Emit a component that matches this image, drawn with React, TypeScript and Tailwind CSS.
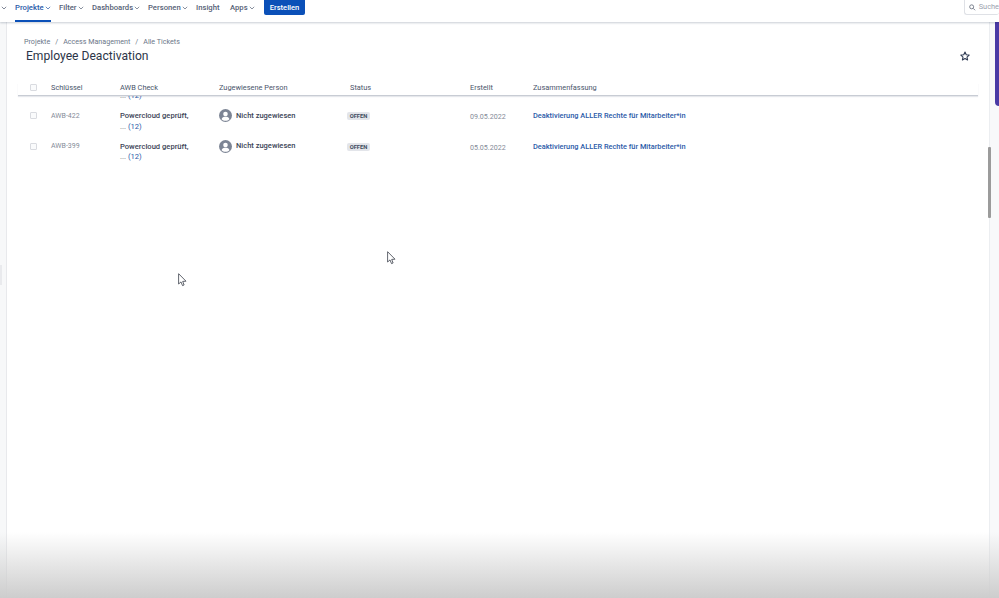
import React from "react";

function Chevron({ className = "" }: { className?: string }) {
  return (
    <svg width="6" height="4" viewBox="0 0 6 4" className={className} fill="none" stroke="currentColor" strokeWidth="0.7">
      <path d="M0.8 0.8 L3 3 L5.2 0.8" />
    </svg>
  );
}

function Cursor({ className }: { className: string }) {
  return (
    <svg width="9" height="14" viewBox="0 0 9 14" className={className} fill="#fff" stroke="#3a3f4a" strokeWidth="0.8">
      <path d="M0.6 0.7 V11 L3 8.9 L4.5 12.6 L6.1 12 L4.7 8.4 L8 8.2 Z" />
    </svg>
  );
}

function NavItem({ label, active, chevron = true, width }: { label: string; active?: boolean; chevron?: boolean; width: string }) {
  return (
    <div className={`flex h-[22px] items-start ${width} ${active ? "text-[#2a5aa8]" : "text-[#566176]"}`}>
      <div className={`flex h-full items-start gap-[1px] pt-[3px] ${active ? "border-b-2 border-[#0b50b8]" : ""}`}>
        <span className="text-[7.7px] leading-[9px] font-medium">{label}</span>
        {chevron && <Chevron className="mt-[3px]" />}
      </div>
    </div>
  );
}

function Avatar() {
  return (
    <svg width="13" height="13" viewBox="0 0 13 13">
      <circle cx="6.5" cy="6.5" r="6.5" fill="#7d8595" />
      <circle cx="6.5" cy="5" r="2.3" fill="#fff" />
      <path d="M2.6 10.2 C3 8.2 4.6 7.8 6.5 7.8 C8.4 7.8 10 8.2 10.4 10.2 C9.4 11.3 8 11.8 6.5 11.8 C5 11.8 3.6 11.3 2.6 10.2 Z" fill="#fff" />
    </svg>
  );
}

const cols = "grid grid-cols-[21px_69px_99px_131px_120px_63px_1fr] items-start";

function More() {
  return (
    <div className="text-[7.6px] leading-[10.5px] font-normal">
      <span className="text-[#6b7280]">...</span>
      <span className="text-[#2a5aa8]"> (12)</span>
    </div>
  );
}

function Row({ id, date }: { id: string; date: string }) {
  return (
    <div className={`${cols} h-[30.5px] pl-[12px]`}>
      <div className="mt-[2px] h-[7px] w-[7px] rounded-[1px] border border-[#d9dbe0] bg-[#fafbfc]" />
      <div className="mt-[0.5px] text-[7px] leading-[10px] text-[#858b98]">{id}</div>
      <div className="text-[7.6px] leading-[10.5px] font-medium text-[#3a4356]">
        <div className="mt-[1px]">Powercloud geprüft,</div>
        <More />
      </div>
      <div className="-mt-[1px] flex items-center gap-[4px] text-[7.5px] font-medium text-[#3a4356]">
        <Avatar />
        <span>Nicht zugewiesen</span>
      </div>
      <div className="mt-[2px] -ml-[3px]">
        <span className="block w-[23px] rounded-[2px] bg-[#e3e5ea] text-center text-[5.8px] leading-[8px] font-bold text-[#414b5e]">OFFEN</span>
      </div>
      <div className="mt-[2px] text-[7.1px] leading-[10px] text-[#858b98]">{date}</div>
      <div className="mt-[1px] text-[7.4px] leading-[10px] font-medium text-[#2a5aa8]">Deaktivierung ALLER Rechte für Mitarbeiter*in</div>
    </div>
  );
}

export default function App() {
  return (
    <div className="relative flex h-[598px] w-[999px] flex-col overflow-hidden bg-white font-['Roboto','Noto_Sans',sans-serif]">
      <header className="z-10 flex h-[22px] shrink-0 items-start bg-white pl-[1px] shadow-[0_1px_2px_rgba(9,30,66,0.22)]">
        <Chevron className="mt-[6px] text-[#4a556b]" />
        <div className="ml-[8px] flex h-full items-start">
          <NavItem label="Projekte" active width="w-[44px]" />
          <NavItem label="Filter" width="w-[33px]" />
          <NavItem label="Dashboards" width="w-[56px]" />
          <NavItem label="Personen" width="w-[48px]" />
          <NavItem label="Insight" chevron={false} width="w-[34px]" />
          <NavItem label="Apps" width="w-[34px]" />
        </div>
        <div className="flex h-[15px] w-[41px] items-center justify-center rounded-b-[2px] bg-[#0b50b8] text-[7.6px] font-medium text-white">Erstellen</div>
        <div className="ml-auto flex h-[15px] w-[35px] items-center gap-[3px] rounded-b-[3px] border border-t-0 border-r-0 border-[#dfe1e6] pl-[4px] text-[7.4px] text-[#9aa1ae]">
          <svg width="7" height="7" viewBox="0 0 7 7" fill="none" stroke="#6b7280" strokeWidth="0.9">
            <circle cx="2.8" cy="2.8" r="2.1" />
            <path d="M4.4 4.4 L6.4 6.4" />
          </svg>
          <span>Suche</span>
        </div>
      </header>

      <div className="flex min-h-0 flex-1">
        <aside className="relative w-[7px] shrink-0 border-r border-[#e8e9ec] bg-[#f7f8f9]">
          <div className="absolute top-[243px] left-0 h-[20px] w-[2px] bg-[#e9eaed]" />
        </aside>

        <main className="flex min-w-0 flex-1 flex-col pl-[11px]">
          <div className="flex items-start pr-[12px]">
            <div className="flex-1 pt-[15px] pl-[6px]">
              <div className="flex gap-[5px] pt-[0.5px] text-[7.15px] leading-[8px] text-[#6b7688]">
                <span>Projekte</span>
                <span>/</span>
                <span>Access Management</span>
                <span>/</span>
                <span>Alle Tickets</span>
              </div>
              <h1 className="mt-[2.5px] pl-[2px] text-[12.1px] leading-[17px] font-normal text-[#2c3548]">Employee Deactivation</h1>
            </div>
            <svg width="10" height="10" viewBox="0 0 24 24" className="mt-[29px] mr-[7px]" fill="none" stroke="#2e3a52" strokeWidth="2.6" strokeLinejoin="round">
              <path d="M12 2.5 L15 9 L22 9.8 L16.8 14.5 L18.2 21.5 L12 18 L5.8 21.5 L7.2 14.5 L2 9.8 L9 9 Z" />
            </svg>
          </div>

          <div className="mr-[11px] flex flex-col">
            <div className={`${cols} mt-[18px] h-[13px] border-b border-[#c8ccd4] pl-[12px] text-[7.4px] leading-[9px] text-[#4a556b] shadow-[0_1px_1px_rgba(9,30,66,0.1)]`}>
              <div className="mt-[1px] h-[7px] w-[7px] rounded-[1px] border border-[#d9dbe0] bg-[#fafbfc]" />
              <div>Schlüssel</div>
              <div>AWB Check</div>
              <div>Zugewiesene Person</div>
              <div>Status</div>
              <div>Erstellt</div>
              <div>Zusammenfassung</div>
            </div>
            <div className="h-[80px] overflow-hidden">
              <div className="-mt-[16.5px]">
                <div className={`${cols} h-[30.5px] pt-[11.5px] pl-[12px]`}>
                  <div />
                  <div />
                  <More />
                </div>
                <Row id="AWB-422" date="09.05.2022" />
                <Row id="AWB-399" date="05.05.2022" />
              </div>
            </div>
          </div>
        </main>

        <aside className="relative w-[10px] shrink-0 border-l border-[#eceef1] bg-[#f8f9fa]">
          <div className="absolute top-[125px] left-[-2px] h-[71px] w-[3px] rounded-[1px] bg-[#9b9b9b]" />
          <div className="absolute top-0 right-0 h-[84px] w-[4px] rounded-bl-[4px] bg-[#4a3aa5]" />
        </aside>
      </div>

      <Cursor className="absolute top-[273px] left-[178px]" />
      <Cursor className="absolute top-[251px] left-[387px]" />
      <div className="pointer-events-none absolute right-0 bottom-0 left-0 h-[66px] bg-gradient-to-b from-[rgba(200,200,200,0)] to-[#cdcdcd]" />
    </div>
  );
}
